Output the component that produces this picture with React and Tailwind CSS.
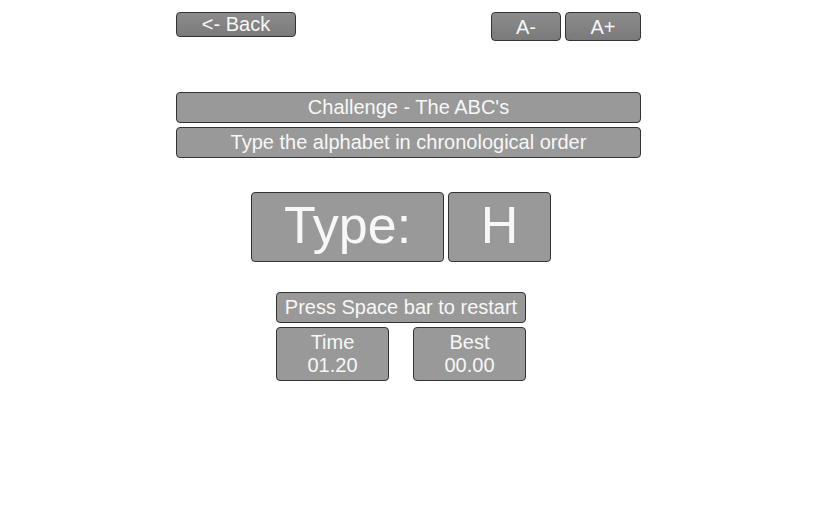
export default function App() {
  const panel =
    "flex items-center justify-center bg-[#999999] border border-[#333333] rounded-[4px] text-[#f7f7f7]";
  const btn =
    "flex items-center justify-center border border-[#333333] rounded-[4px] text-[#f7f7f7] bg-gradient-to-b from-[#8c8c8c] to-[#7a7a7a] text-[20px] leading-none";

  return (
    <div
      className="w-[830px] h-[507px] bg-white overflow-hidden"
      style={{ fontFamily: '"Liberation Sans", Arial, sans-serif' }}
    >
      <div className="ml-[176px] w-[465px] pt-[12px] flex flex-col">
        {/* TOP BAR */}
        <div className="flex items-start justify-between">
          <button className={`${btn} w-[120px] h-[25px] pb-[1px]`}>&lt;- Back</button>
          <div className="flex gap-[4px]">
            <button className={`${btn} w-[70px] h-[29px] pt-[1px]`}>A-</button>
            <button className={`${btn} w-[76px] h-[29px] pt-[1px]`}>A+</button>
          </div>
        </div>

        {/* TITLE */}
        <div className={`${panel} mt-[51px] h-[31px] text-[20px] pb-[2px]`}>Challenge - The ABC's</div>
        <div className={`${panel} mt-[4px] h-[31px] text-[20px] pb-[2px]`}>
          Type the alphabet in chronological order
        </div>

        {/* TYPE ROW */}
        <div className="flex gap-[4px] ml-[75px] mt-[34px]">
          <div className={`${panel} w-[193px] h-[70px] text-[52px] leading-none pb-[4px]`}>Type:</div>
          <div className={`${panel} w-[103px] h-[70px] text-[52px] leading-none pb-[4px]`}>H</div>
        </div>

        {/* STATUS */}
        <div className="ml-[100px] w-[250px] mt-[30px] flex flex-col gap-[4px]">
          <div className={`${panel} h-[31px] text-[20px] pb-[2px]`}>Press Space bar to restart</div>
          <div className="flex justify-between">
            <div className={`${panel} flex-col w-[113px] h-[54px] text-[20px] leading-[23px]`}>
              <span>Time</span>
              <span>01.20</span>
            </div>
            <div className={`${panel} flex-col w-[113px] h-[54px] text-[20px] leading-[23px]`}>
              <span>Best</span>
              <span>00.00</span>
            </div>
          </div>
        </div>
      </div>
    </div>
  );
}
